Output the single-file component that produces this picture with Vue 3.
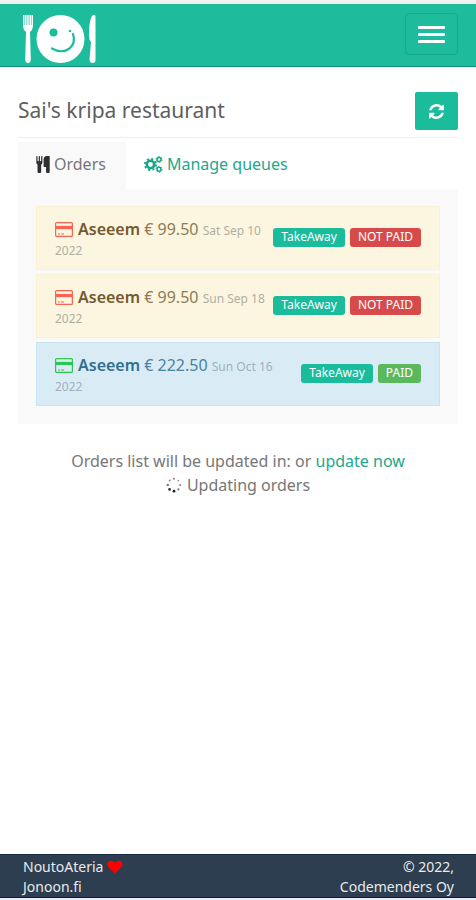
<script setup>
import { ref } from 'vue'

const tab = ref('orders')
const orders = [
  { id: 1, name: 'Aseeem', price: '€ 99.50', date: 'Sat Sep 10 2022', paid: false },
  { id: 2, name: 'Aseeem', price: '€ 99.50', date: 'Sun Sep 18 2022', paid: false },
  { id: 3, name: 'Aseeem', price: '€ 222.50', date: 'Sun Oct 16 2022', paid: true }
]
</script>

<template>
  <div class="page">
    <header class="navbar">
      <a class="brand" href="#" aria-label="Home">
        <svg width="74" height="50" viewBox="0 0 74 50" fill="#fff">
          <path d="M1 1V11Q1 16 4 18L3.200 45Q3.200 49 6 49T8.800 45L8 18Q11 16 11 11V1H9.800V11H8.900V1H7.700V11H6.600V1H5.400V11H4.300V1H3.100V11H2.200V1Z" />
          <path d="M1 1H11V11H1Z" opacity=".4" />
          <circle cx="38.500" cy="25" r="24" />
          <circle cx="31.500" cy="18.500" r="4" fill="#1abc9c" />
          <path d="M51 20Q54 29 47.500 34.500Q40 40 30 34.500" fill="none" stroke="#1abc9c" stroke-width="2.200" stroke-linecap="round" />
          <circle cx="48" cy="17" r="1.300" fill="#1abc9c" />
          <path d="M73.500 3Q73.500 0 71 1Q67 4 67 22Q67 26 69 28L67.500 45Q67.500 49 70.500 49T73.500 46Z" />
        </svg>
      </a>
      <button class="toggle" type="button" aria-label="Toggle navigation">
        <span></span><span></span><span></span>
      </button>
    </header>

    <main class="content">
      <div class="heading">
        <h1>Sai's kripa restaurant</h1>
        <button class="refresh" type="button" aria-label="Refresh">
          <svg width="15" height="15" viewBox="0 0 1536 1536" fill="#fff">
            <path d="M1511 928q0 5-1 7-64 268-268 434.500t-478 166.500q-146 0-282.500-55t-243.500-157l-129 129q-19 19-45 19t-45-19-19-45v-448q0-26 19-45t45-19h448q26 0 45 19t19 45-19 45l-137 137q71 66 161 102t187 36q134 0 250-65t186-179q11-17 53-117 8-23 30-23h192q13 0 22.500 9.500t9.500 22.500zm25-800v448q0 26-19 45t-45 19h-448q-26 0-45-19t-19-45 19-45l138-138q-148-137-349-137-134 0-250 65t-186 179q-11 17-53 117-8 23-30 23h-199q-13 0-22.500-9.500t-9.500-22.500v-7q65-268 270-434.500t480-166.500q146 0 284 55.500t245 156.500l130-129q19-19 45-19t45 19 19 45z" />
          </svg>
        </button>
      </div>

      <nav class="tabs">
        <a href="#orders" :class="{ active: tab === 'orders' }" @click.prevent="tab = 'orders'">
          <svg width="14" height="17" viewBox="160 0 1472 1792" preserveAspectRatio="none" fill="#2f2f33">
            <path d="M832 64v640q0 61-35.500 111t-92.500 70v779q0 52-38 90t-90 38h-128q-52 0-90-38t-38-90v-779q-57-20-92.500-70t-35.500-111v-640q0-26 19-45t45-19 45 19 19 45v416q0 26 19 45t45 19 45-19 19-45v-416q0-26 19-45t45-19 45 19 19 45v416q0 26 19 45t45 19 45-19 19-45v-416q0-26 19-45t45-19 45 19 19 45zm768 0v1600q0 52-38 90t-90 38h-128q-52 0-90-38t-38-90v-512h-224q-13 0-22.500-9.500t-9.500-22.500v-800q0-132 94-226t226-94h256q26 0 45 19t19 45z" />
          </svg>
          <span>Orders</span>
        </a>
        <a href="#queues" :class="{ active: tab === 'queues' }" @click.prevent="tab = 'queues'">
          <svg width="19" height="17" viewBox="0 0 19 17" fill="none" stroke="#18a689">
            <circle cx="6.500" cy="8.500" r="3.700" stroke-width="2.600" />
            <circle cx="6.500" cy="8.500" r="5.600" stroke-width="1.800" stroke-dasharray="2.200 2.198" />
            <circle cx="15" cy="3.500" r="2" stroke-width="1.500" />
            <circle cx="15" cy="3.500" r="3" stroke-width="1" stroke-dasharray="1.600 1.542" />
            <circle cx="15" cy="13.300" r="2" stroke-width="1.500" />
            <circle cx="15" cy="13.300" r="3" stroke-width="1" stroke-dasharray="1.600 1.542" />
          </svg>
          <span>Manage queues</span>
        </a>
      </nav>

      <section class="panel">
        <article v-for="order in orders" :key="order.id" class="order" :class="{ paid: order.paid }">
          <p class="info">
            <svg class="card" width="18" height="15" viewBox="0 0 18 15" fill="none" stroke="currentColor">
              <rect x=".6" y=".6" width="16.800" height="13.800" rx="1" stroke-width="1.200" />
              <path d="M1 5.500H17" stroke-width="3.200" />
              <path d="M3 12H5M6 12H9" stroke-width="1" />
            </svg>
            <strong>{{ order.name }}</strong> {{ order.price }} <small>{{ order.date }}</small>
          </p>
          <div class="labels">
            <span class="label">TakeAway</span>
            <span class="label" :class="order.paid ? 'green' : 'red'">{{ order.paid ? 'PAID' : 'NOT PAID' }}</span>
          </div>
        </article>
      </section>

      <div class="status">
        <p>Orders list will be updated in: or <a href="#update">update now</a></p>
        <p class="loading">
          <svg width="16" height="16" viewBox="0 0 16 16" fill="#555">
            <circle cx="8" cy="1.800" r="1" opacity=".7" />
            <circle cx="12.400" cy="3.600" r=".9" opacity=".6" />
            <circle cx="14.200" cy="8" r="1" opacity=".7" />
            <circle cx="12.400" cy="12.400" r="1.100" opacity=".8" />
            <circle cx="8" cy="14.200" r="1.400" fill="#222" />
            <circle cx="3.600" cy="12.400" r="1.400" fill="#333" />
            <circle cx="1.800" cy="8" r="1.200" opacity=".8" />
            <circle cx="3.600" cy="3.600" r="1" opacity=".7" />
          </svg>
          <span>Updating orders</span>
        </p>
      </div>
    </main>

    <footer class="footer">
      <div>
        NoutoAteria
        <svg width="16" height="14" viewBox="0 0 16 14" fill="#f00" aria-label="love">
          <path d="M8 13.500L1.300 7C-1.500 3.500 2.500-2 8 2.500C13.500-2 17.500 3.500 14.700 7Z" />
        </svg><br />
        Jonoon.fi
      </div>
      <div class="right">© 2022,<br />Codemenders Oy</div>
    </footer>
  </div>
</template>

<style>
body {
  background: #fff;
}
</style>

<style scoped>
* {
  box-sizing: border-box;
}
.page {
  min-height: 100vh;
  display: flex;
  flex-direction: column;
  border-top: 4px solid #f1f3f3;
  border-bottom: 2px solid #e9edf2;
  font-family: "Noto Sans", "Open Sans", sans-serif;
  font-size: 16px;
  line-height: 24px;
  color: #777;
}
a {
  color: #22a78c;
  text-decoration: none;
}
h1,
p {
  margin: 0;
  font-weight: 400;
}
.navbar {
  display: flex;
  justify-content: space-between;
  align-items: flex-start;
  height: 63px;
  padding: 9px 18px 0 22px;
  background: #1dbc9c;
  border-bottom: 1px solid #159078;
}
.brand {
  display: flex;
  padding-top: 1px;
}
.toggle {
  display: flex;
  flex-direction: column;
  align-items: center;
  justify-content: center;
  gap: 4px;
  width: 53px;
  height: 42px;
  padding: 0;
  border: 1px solid #19a98c;
  border-radius: 4px;
  background: transparent;
}
.toggle span {
  width: 27px;
  height: 3px;
  border-radius: 1px;
  background: #fff;
}
.content {
  flex: 1;
  padding: 24px 18px;
}
.heading {
  display: flex;
  justify-content: space-between;
  align-items: flex-start;
  height: 47px;
  border-bottom: 1px solid #eee;
}
h1 {
  padding-top: 4px;
  font-size: 21px;
  line-height: 30px;
  color: #5e5e5e;
}
.refresh {
  display: flex;
  align-items: center;
  justify-content: center;
  width: 43px;
  height: 38px;
  margin-top: 1px;
  border: 0;
  border-radius: 2px;
  background: #1abc9c;
}
.tabs {
  display: flex;
  padding-top: 4px;
}
.tabs a {
  display: flex;
  align-items: center;
  gap: 4px;
  height: 47px;
  padding: 0 20px 3px 18px;
}
.tabs .active {
  background: #f9f9f9;
  color: #777;
}
.panel {
  display: flex;
  flex-direction: column;
  gap: 4px;
  padding: 17px 18px 18px;
  background: #f9f9f9;
}
.order {
  display: flex;
  justify-content: space-between;
  gap: 4px;
  height: 64px;
  padding: 13px 18px;
  border: 1px solid #faf0d2;
  background: #fcf6e1;
  color: #8f7b55;
}
.order.paid {
  border-color: #c5e6ef;
  background: #d9ecf6;
  color: #4c819f;
}
.labels {
  flex: none;
  display: flex;
  gap: 5px;
  padding-top: 8px;
}
.label {
  height: 19px;
  padding: 0 8px;
  border-radius: 3px;
  background: #1abc9c;
  color: #fff;
  font-size: 12px;
  line-height: 17px;
}
.red {
  background: #d64b49;
}
.green {
  background: #5cb85c;
}
.info {
  line-height: 18px;
}
strong {
  font-weight: 600;
  color: #735a2f;
}
.paid strong {
  color: #31708f;
}
small {
  font-size: 12px;
  color: #b1aea1;
}
.paid small {
  color: #9fb1bd;
}
.card {
  margin-right: 5px;
  vertical-align: -2px;
  color: #fa6450;
}
.paid .card {
  color: #2dc653;
}
.status {
  padding-top: 25px;
  text-align: center;
}
.loading {
  display: flex;
  align-items: center;
  justify-content: center;
  gap: 5px;
}
.footer {
  display: flex;
  justify-content: space-between;
  height: 44px;
  padding: 2px 22px 0 23px;
  border-top: 1px solid #172b40;
  border-bottom: 1px solid #0c1b3a;
  background: #2c3e50;
  color: #e8eaec;
  font-size: 14px;
  line-height: 20px;
}
.footer svg {
  vertical-align: -2px;
}
.right {
  text-align: right;
}
</style>
